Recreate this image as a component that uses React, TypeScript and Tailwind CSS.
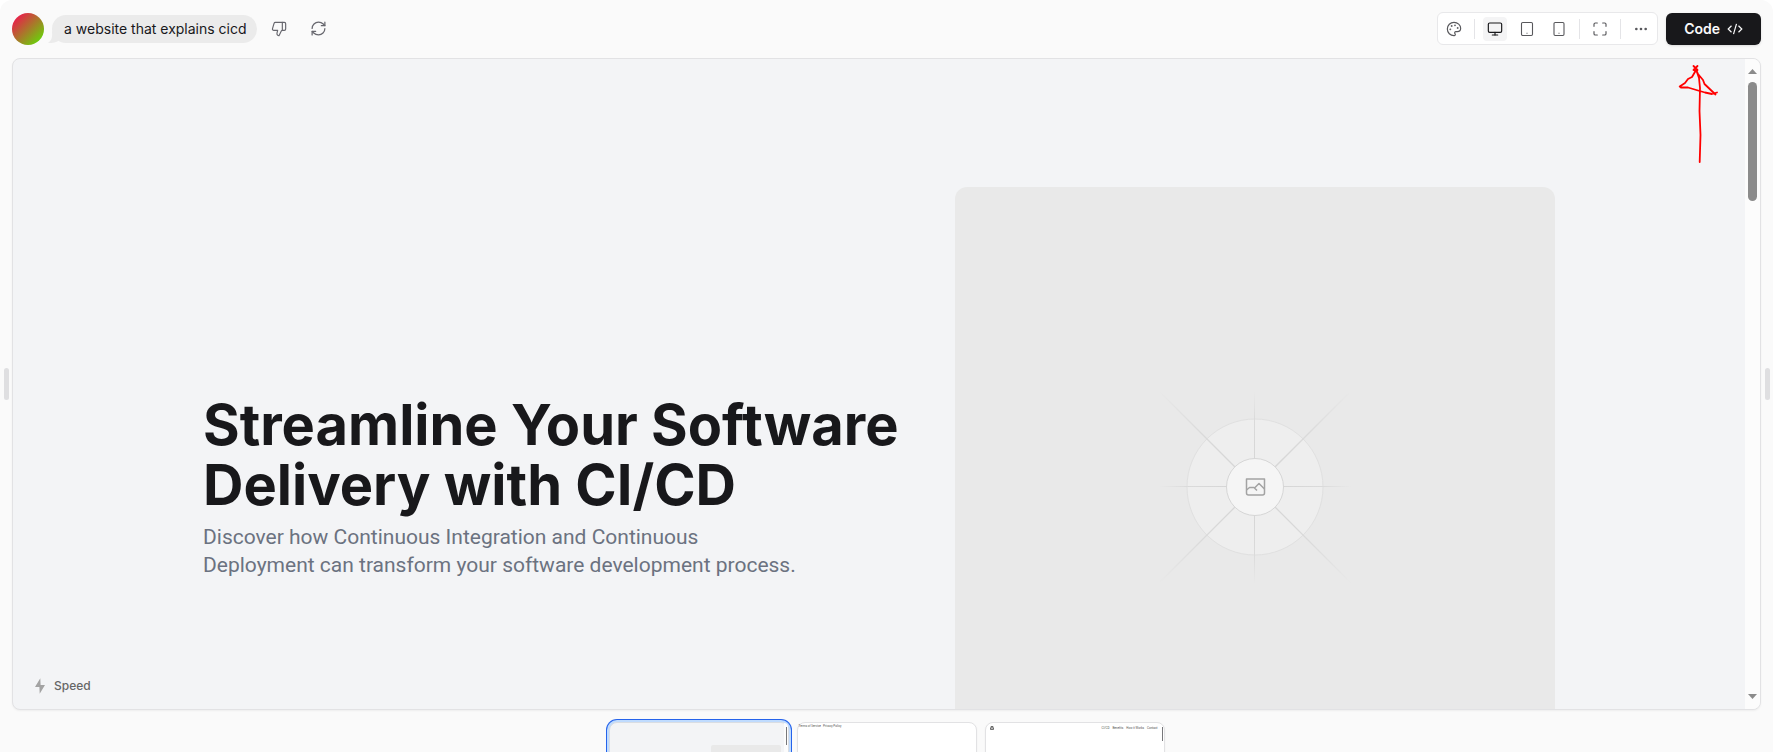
import type { ReactNode } from "react";
import { ThumbsDown, RefreshCw, Palette, Monitor, Maximize, Ellipsis } from "lucide-react";

function ToolButton({ label, active = false, children }: { label: string; active?: boolean; children: ReactNode }) {
  return (
    <button
      type="button"
      aria-label={label}
      aria-pressed={active}
      className={
        active
          ? "flex size-6 items-center justify-center rounded bg-[#f4f4f5] text-[#18181b]"
          : "flex size-6 items-center justify-center rounded text-[#58585c]"
      }
    >
      {children}
    </button>
  );
}

function Divider() {
  return <span className="h-5 w-px bg-[#e4e4e7]" />;
}

function DeviceIcon({ width }: { width: number }) {
  return (
    <svg className="size-4" viewBox="0 0 16 16" fill="none" stroke="currentColor" strokeWidth="1.1" aria-hidden="true">
      <rect x={8 - width / 2} y="1.5" width={width} height="13" rx="1.2" />
      <path d="M7.500 12.200H8.500" />
    </svg>
  );
}

function Header() {
  return (
    <header className="flex h-[58px] shrink-0 items-center justify-between px-3 pb-[13px] pt-3">
      <div className="flex items-center">
        <span className="size-8 rounded-full bg-[linear-gradient(135deg,#ff0055_0%,#55ee00_100%)]" />
        <div className="relative ml-2 flex h-7 items-center rounded-full bg-[#ebebeb] pl-3 pr-2.5 text-sm text-[#18181b]">
          <svg className="absolute -left-1 bottom-0 h-3 w-4 text-[#ebebeb]" viewBox="0 0 16 12" fill="currentColor" aria-hidden="true">
            <path d="M4 0 C4.500 6 4 9.500 0 12 C4 12.300 8 11.500 11 9.500 L16 4 Z" />
          </svg>
          <span className="relative">a website that explains cicd</span>
        </div>
        <button type="button" aria-label="Dislike" className="ml-2 flex size-7 items-center justify-center text-[#67676e]">
          <ThumbsDown size={16} strokeWidth={1.75} />
        </button>
        <button type="button" aria-label="Regenerate" className="ml-3 flex size-7 items-center justify-center text-[#67676e]">
          <RefreshCw size={17} strokeWidth={1.75} />
        </button>
      </div>
      <div className="flex items-center gap-2">
        <div className="flex h-[33px] items-center gap-2 rounded-md border border-[#e8e8ea] bg-white px-1">
          <ToolButton label="Theme"><Palette size={16} strokeWidth={1.75} /></ToolButton>
          <Divider />
          <ToolButton label="Desktop" active><Monitor size={16} strokeWidth={1.75} /></ToolButton>
          <ToolButton label="Tablet"><DeviceIcon width={11} /></ToolButton>
          <ToolButton label="Phone"><DeviceIcon width={10} /></ToolButton>
          <Divider />
          <ToolButton label="Full screen"><Maximize size={16} strokeWidth={1.75} /></ToolButton>
          <Divider />
          <ToolButton label="More"><Ellipsis size={16} strokeWidth={2} /></ToolButton>
        </div>
        <button type="button" className="flex h-8 items-center gap-[7px] rounded-md bg-[#18181b] px-[18px] text-sm font-semibold text-[#fafafa] shadow-sm">
          Code
          <svg className="h-4 w-4" viewBox="0 0 16 16" fill="none" stroke="currentColor" strokeWidth="1.2" aria-hidden="true">
            <path d="M4.500 4.800 1.200 8l3.300 3.200M11.500 4.800 14.800 8l-3.300 3.200M9.500 2.800 6.500 13.200" />
          </svg>
        </button>
      </div>
    </header>
  );
}

function Placeholder() {
  return (
    <div className="flex h-[600px] w-[600px] shrink-0 items-center justify-center rounded-xl bg-[#e9e9e9]">
      <svg className="size-[200px]" viewBox="0 0 200 200" fill="none" role="img" aria-label="Image placeholder">
        <defs>
          <radialGradient id="ray" gradientUnits="userSpaceOnUse" cx="100" cy="100" r="136">
            <stop offset="0.2" stopColor="#d6d6d6" />
            <stop offset="0.55" stopColor="#dadada" />
            <stop offset="1" stopColor="#e9e9e9" />
          </radialGradient>
          <radialGradient id="axis" gradientUnits="userSpaceOnUse" cx="100" cy="100" r="96">
            <stop offset="0.3" stopColor="#d6d6d6" />
            <stop offset="0.7" stopColor="#dadada" />
            <stop offset="1" stopColor="#e9e9e9" />
          </radialGradient>
        </defs>
        <circle cx="100" cy="100" r="68" fill="#eee" stroke="#e0e0e0" />
        <path stroke="url(#ray)" strokeWidth="1.3" d="M4 4 196 196M196 4 4 196" />
        <path stroke="url(#axis)" d="M99.500 4V196M4 99.500H196" />
        <circle cx="100" cy="100" r="28.500" fill="#f5f5f5" stroke="#d6d6d6" />
        <g stroke="#a3a3a3" strokeWidth="1.500" strokeLinejoin="round">
          <path d="M91.500 92H109.500V106Q109.500 108 107.500 108H93.500Q91.500 108 91.500 106Z" />
          <path d="M91.500 103 94.500 100.500H99L102 103.500M99.500 101 104 96.500 109.500 102" />
        </g>
      </svg>
    </div>
  );
}

function Scrollbar() {
  return (
    <div className="flex w-[15px] shrink-0 flex-col items-center bg-[#fcfcfc] py-[10px]" aria-hidden="true">
      <svg className="h-[5px] w-[9px] shrink-0" viewBox="0 0 9 5" fill="#8b8b8b"><path d="M4.500 0 9 5H0Z" /></svg>
      <span className="mt-2 h-[119px] w-[9px] shrink-0 rounded-full bg-[#8b8b8b]" />
      <span className="flex-1" />
      <svg className="h-[5px] w-[9px] shrink-0" viewBox="0 0 9 5" fill="#8b8b8b"><path d="M0 0H9L4.500 5Z" /></svg>
    </div>
  );
}

function Preview() {
  return (
    <section className="relative flex min-h-0 flex-1 overflow-hidden rounded-lg border border-[#e2e2e4] bg-[#f3f4f6] shadow-xs">
      <div className="min-w-0 flex-1 overflow-hidden pt-32">
        <div className="mx-auto flex max-w-[1352px] items-center justify-between">
          <div className="flex flex-col gap-2">
            <h1 className="whitespace-nowrap text-[56px] font-bold leading-[60px] text-[#18181b]">
              Streamline Your Software
              <br />
              Delivery with CI/CD
            </h1>
            <p className="whitespace-nowrap font-['Roboto',sans-serif] text-[21px] leading-7 text-[#6b7280]">
              Discover how Continuous Integration and Continuous
              <br />
              Deployment can transform your software development process.
            </p>
          </div>
          <Placeholder />
        </div>
      </div>
      <Scrollbar />
      <div className="absolute bottom-[15px] left-[21px] flex items-center gap-2 text-xs font-medium text-[#666]">
        <svg className="h-4 w-3" viewBox="0 0 12 16" fill="#a3a3a3" aria-hidden="true">
          <path d="M6.300 0.300 1 9H5.400L5.700 15.700 11 7H6.600Z" />
        </svg>
        Speed
      </div>
      <svg className="absolute right-[38px] top-1 h-[104px] w-11" viewBox="0 0 44 104" fill="none" stroke="#ff0000" strokeWidth="1.8" strokeLinecap="round" strokeLinejoin="round" aria-hidden="true">
        <path d="M15.500 3 19.500 7M19.500 3 15.500 7 17.500 8 14 14 10 16 7 20 1.700 23.500 3 24.500 10 24.500 20 27.500 27 29.500 34 31 39 29.500M37.500 31.500 26.500 21 25 17 20 11 17.700 5.500 21 15 22 25 21.500 48 22.500 72 21.700 99" />
      </svg>
    </section>
  );
}

function Handle({ label }: { label: string }) {
  return (
    <button type="button" aria-label={label} className="flex w-3 shrink-0 items-center justify-end pr-[3px]">
      <span className="h-8 w-[5px] rounded-full bg-[#dfdfe1]" />
    </button>
  );
}

function Thumbnails() {
  return (
    <nav aria-label="Variants" className="flex h-[42px] shrink-0 justify-center gap-2 overflow-hidden pt-3 font-['Roboto',sans-serif] text-[3px] leading-[4px] text-[#555]">
      <button type="button" aria-label="Variant 1" className="relative h-20 w-[180px] rounded-lg border border-[#d9dde3] bg-[#f3f4f6] shadow-[0_0_0_2px_#bfdbfe,0_0_0_3px_#2563eb]">
        <span className="absolute right-0 top-0 h-full w-1 rounded-tr-lg bg-[#fcfcfc]" />
        <span className="absolute right-px top-1 h-[18px] w-px bg-[#77777a]" />
        <span className="absolute right-[7px] top-[22px] h-16 w-[70px] rounded-t-xs bg-[#e9e9e9]" />
      </button>
      <button type="button" aria-label="Variant 2" className="flex h-20 w-[180px] items-start gap-[2px] rounded-lg border border-[#e2e2e4] bg-white pl-px pt-px shadow-xs">
        <span>Terms of Service</span>
        <span>Privacy Policy</span>
      </button>
      <button type="button" aria-label="Variant 3" className="relative flex h-20 w-[180px] items-start justify-end gap-[3px] rounded-lg border border-[#e2e2e4] bg-white pr-[6px] pt-[3px] shadow-xs">
        <svg className="absolute left-1 top-[3px] size-1" viewBox="0 0 8 8" fill="none" stroke="#444" strokeWidth="1.500" aria-hidden="true">
          <path d="M2 4V1H6V4M1 4H7V7H1Z" />
        </svg>
        <span>CI/CD</span>
        <span>Benefits</span>
        <span>How it Works</span>
        <span>Contact</span>
        <span className="absolute right-px top-1 h-[14px] w-px bg-[#77777a]" />
      </button>
    </nav>
  );
}

export default function App() {
  return (
    <div className="h-screen overflow-hidden bg-white pr-[5px] font-['Inter','Liberation_Sans',sans-serif]">
      <div className="flex h-full flex-col rounded-t-xl bg-[#fafafa]">
        <Header />
        <main className="flex min-h-0 flex-1">
          <Handle label="Resize left" />
          <Preview />
          <Handle label="Resize right" />
        </main>
        <Thumbnails />
      </div>
    </div>
  );
}
